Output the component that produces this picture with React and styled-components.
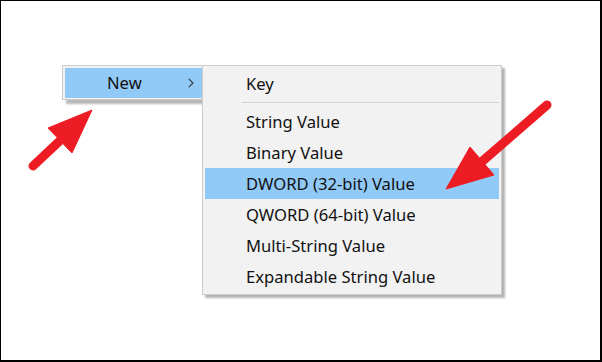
import React from 'react'
import styled, { createGlobalStyle } from 'styled-components'

const Global = createGlobalStyle`
  html, body {
    margin: 0;
    padding: 0;
    background: #fff;
  }
  * { box-sizing: border-box; }
`

const Stage = styled.div`
  position: relative;
  width: 602px;
  height: 362px;
  border-style: solid;
  border-color: #000;
  border-width: 1px 2px 2px 1px;
  background: #fff;
  padding: 64px 0 0 61px;
  font-family: "Noto Sans", "Open Sans", sans-serif;
  font-size: 16.6px;
  color: #111;
`

const MenuRow = styled.div`
  display: flex;
  align-items: flex-start;
`

const ParentMenu = styled.div`
  width: 140px;
  padding: 2px 0 1px 2px;
  background: #f2f2f2;
  border: 1px solid #cccccc;
  border-right: none;
  box-shadow: 4px 4px 2px rgba(0, 0, 0, 0.28);
`

const ParentItem = styled.div`
  display: flex;
  align-items: center;
  height: 30px;
  padding-left: 42px;
  padding-right: 8px;
  background: #91c9f7;
`

const Label = styled.span`
  flex: 1;
  white-space: nowrap;
  line-height: 1;
  padding-top: 1px;
`

const SubMenu = styled.div`
  position: relative;
  z-index: 1;
  width: 300px;
  padding: 2px;
  background: #f2f2f2;
  border: 1px solid #cccccc;
  box-shadow: 3px 3px 2px rgba(0, 0, 0, 0.3);
`

const Item = styled.div`
  display: flex;
  align-items: center;
  height: 31px;
  padding-left: 41px;
  background: ${p => (p.$active ? '#91c9f7' : 'transparent')};
`

const Separator = styled.div`
  height: 1px;
  margin: 3px 0 3px 37px;
  background: #d2d2d2;
`

const Overlay = styled.svg`
  position: absolute;
  left: -1px;
  top: -1px;
  z-index: 2;
  pointer-events: none;
`

const Chevron = () => (
  <svg width="6" height="10" viewBox="0 0 6 10">
    <path d="M0.8 0.8 L5 5 L0.8 9.2" fill="none" stroke="#333" strokeWidth="1.1" />
  </svg>
)

const items = [
  'String Value',
  'Binary Value',
  'DWORD (32-bit) Value',
  'QWORD (64-bit) Value',
  'Multi-String Value',
  'Expandable String Value',
]

export default function App() {
  return (
    <Stage>
      <Global />
      <MenuRow>
        <ParentMenu>
          <ParentItem>
            <Label>New</Label>
            <Chevron />
          </ParentItem>
        </ParentMenu>
        <SubMenu>
          <Item><Label>Key</Label></Item>
          <Separator />
          {items.map(t => (
            <Item key={t} $active={t.startsWith('DWORD')}>
              <Label>{t}</Label>
            </Item>
          ))}
        </SubMenu>
      </MenuRow>
      <Overlay width="602" height="362" viewBox="0 0 602 362">
        <g fill="#ed1c24" stroke="#ed1c24">
          <line x1="33" y1="166" x2="66" y2="135" strokeWidth="9" strokeLinecap="round" />
          <polygon points="92,110 48,128 72,153" strokeWidth="1" strokeLinejoin="round" />
          <line x1="547" y1="105" x2="478" y2="165" strokeWidth="9" strokeLinecap="round" />
          <polygon points="446,189 470,147 494,175" strokeWidth="1" strokeLinejoin="round" />
        </g>
      </Overlay>
    </Stage>
  )
}
